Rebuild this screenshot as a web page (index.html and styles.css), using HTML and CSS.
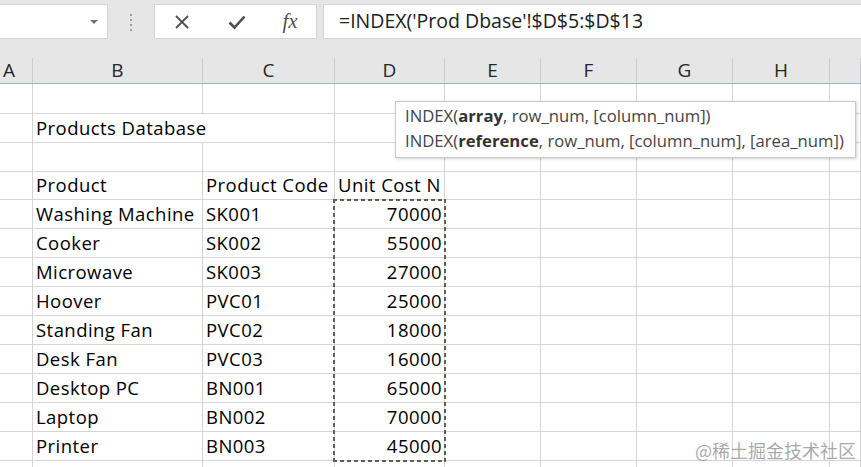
FILE: index.html
```html
<!DOCTYPE html>
<html>
<head>
<meta charset="utf-8">
<link rel="stylesheet" href="styles.css">
</head>
<body>
<div class="toolbar">
  <div class="namebox"><span class="arrow"></span></div>
  <div class="grip">
    <svg width="4" height="18" viewBox="0 0 4 18"><g fill="#9a9a9a"><rect x="1" y="1" width="2" height="2"/><rect x="1" y="6" width="2" height="2"/><rect x="1" y="11" width="2" height="2"/><rect x="1" y="16" width="2" height="2"/></g></svg>
  </div>
  <div class="fxbox">
    <span class="ico ico-x"><svg width="16" height="16" viewBox="0 0 16 16"><path d="M2 2 L14 14 M14 2 L2 14" stroke="#505050" stroke-width="1.8" fill="none"/></svg></span>
    <span class="ico ico-ok"><svg width="18" height="16" viewBox="0 0 18 16"><path d="M1.5 8.5 L6.5 13.5 L16.5 2.5" stroke="#505050" stroke-width="2.6" fill="none"/></svg></span>
    <span class="ico fx">fx</span>
  </div>
  <div class="formula">=INDEX('Prod Dbase'!$D$5:$D$13</div>
</div>

<div class="sheet">
  <div class="row hdr">
    <div class="h">A</div><div class="h">B</div><div class="h">C</div><div class="h">D</div><div class="h">E</div><div class="h">F</div><div class="h">G</div><div class="h">H</div><div class="h"></div>
  </div>
  <div class="row r30"><div class="c"></div><div class="c"></div><div class="c"></div><div class="c"></div><div class="c"></div><div class="c"></div><div class="c"></div><div class="c"></div><div class="c"></div></div>
  <div class="row"><div class="c"></div><div class="c over">Products Database</div><div class="c"></div><div class="c"></div><div class="c"></div><div class="c"></div><div class="c"></div><div class="c"></div><div class="c"></div></div>
  <div class="row"><div class="c"></div><div class="c"></div><div class="c"></div><div class="c"></div><div class="c"></div><div class="c"></div><div class="c"></div><div class="c"></div><div class="c"></div></div>
  <div class="row r28"><div class="c"></div><div class="c">Product</div><div class="c">Product Code</div><div class="c">Unit Cost N</div><div class="c"></div><div class="c"></div><div class="c"></div><div class="c"></div><div class="c"></div></div>
  <div class="row"><div class="c"></div><div class="c">Washing Machine</div><div class="c">SK001</div><div class="c num">70000</div><div class="c"></div><div class="c"></div><div class="c"></div><div class="c"></div><div class="c"></div></div>
  <div class="row"><div class="c"></div><div class="c">Cooker</div><div class="c">SK002</div><div class="c num">55000</div><div class="c"></div><div class="c"></div><div class="c"></div><div class="c"></div><div class="c"></div></div>
  <div class="row"><div class="c"></div><div class="c">Microwave</div><div class="c">SK003</div><div class="c num">27000</div><div class="c"></div><div class="c"></div><div class="c"></div><div class="c"></div><div class="c"></div></div>
  <div class="row"><div class="c"></div><div class="c">Hoover</div><div class="c">PVC01</div><div class="c num">25000</div><div class="c"></div><div class="c"></div><div class="c"></div><div class="c"></div><div class="c"></div></div>
  <div class="row"><div class="c"></div><div class="c">Standing Fan</div><div class="c">PVC02</div><div class="c num">18000</div><div class="c"></div><div class="c"></div><div class="c"></div><div class="c"></div><div class="c"></div></div>
  <div class="row"><div class="c"></div><div class="c">Desk Fan</div><div class="c">PVC03</div><div class="c num">16000</div><div class="c"></div><div class="c"></div><div class="c"></div><div class="c"></div><div class="c"></div></div>
  <div class="row"><div class="c"></div><div class="c">Desktop PC</div><div class="c">BN001</div><div class="c num">65000</div><div class="c"></div><div class="c"></div><div class="c"></div><div class="c"></div><div class="c"></div></div>
  <div class="row"><div class="c"></div><div class="c">Laptop</div><div class="c">BN002</div><div class="c num">70000</div><div class="c"></div><div class="c"></div><div class="c"></div><div class="c"></div><div class="c"></div></div>
  <div class="row"><div class="c"></div><div class="c">Printer</div><div class="c">BN003</div><div class="c num">45000</div><div class="c"></div><div class="c"></div><div class="c"></div><div class="c"></div><div class="c"></div></div>
  <div class="row"><div class="c"></div><div class="c"></div><div class="c"></div><div class="c"></div><div class="c"></div><div class="c"></div><div class="c"></div><div class="c"></div><div class="c"></div></div>
</div>

<div class="marquee"></div>

<div class="tooltip">
  <div>INDEX(<b>array</b>, row_num, [column_num])</div>
  <div>INDEX(<b>reference</b>, row_num, [column_num], [area_num])</div>
</div>

<div class="watermark">@稀土掘金技术社区</div>
</body>
</html>
```

FILE: styles.css
```css
html, body {
  margin: 0;
  padding: 0;
}
body {
  width: 861px;
  height: 467px;
  overflow: hidden;
  background: #ffffff;
  position: relative;
  font-family: "Open Sans", "Liberation Sans", sans-serif;
}

/* ---------- formula bar ---------- */
.toolbar {
  height: 52px;
  background: #e6e6e6;
  display: flex;
  align-items: flex-start;
  padding-top: 4px;
  box-sizing: border-box;
}
.namebox {
  width: 108px;
  height: 35px;
  background: #ffffff;
  border: 1px solid #d4d4d4;
  border-left: none;
  box-sizing: border-box;
  display: flex;
  justify-content: flex-end;
  align-items: center;
  padding-right: 9px;
}
.arrow {
  width: 0;
  height: 0;
  border-left: 4px solid transparent;
  border-right: 4px solid transparent;
  border-top: 4px solid #707070;
}
.grip {
  width: 46px;
  height: 35px;
  display: flex;
  align-items: center;
  justify-content: center;
}
.fxbox {
  width: 163px;
  height: 35px;
  background: #ffffff;
  border: 1px solid #d4d4d4;
  box-sizing: border-box;
  display: flex;
  align-items: center;
}
.ico {
  display: flex;
  align-items: center;
  justify-content: center;
  width: 20px;
  height: 20px;
}
.ico-x { margin-left: 17px; }
.ico-ok { margin-left: 35px; }
.fx {
  margin-left: 33px;
  font-family: "Liberation Serif", serif;
  font-style: italic;
  font-size: 21px;
  color: #505050;
}
.formula {
  flex: 1;
  margin-left: 6px;
  height: 35px;
  background: #ffffff;
  border: 1px solid #d4d4d4;
  border-right: none;
  box-sizing: border-box;
  padding-left: 15px;
  font-family: "Open Sans", "Noto Sans", sans-serif;
  font-size: 19.5px;
  line-height: 32px;
  color: #202020;
  white-space: nowrap;
}

/* ---------- sheet ---------- */
.row {
  display: grid;
  grid-template-columns: 33px 170px 132px 110px 96px 96px 96px 97px 1fr;
  height: 29px;
}
.row.r30 { height: 30px; }
.row.r28 { height: 28px; }
.row.hdr {
  height: 32px;
  background: #e6e6e6;
  border-bottom: 1px solid #9fb3c8;
  box-sizing: border-box;
}
.h {
  border-right: 1px solid #c9cdd2;
  box-sizing: border-box;
  display: flex;
  align-items: center;
  justify-content: center;
  font-size: 19px;
  color: #262626;
  margin-top: 6px;
  height: 25px;
  padding-bottom: 2px;
  line-height: 18px;
}
.h:first-child {
  justify-content: flex-start;
  padding-left: 3px;
}
.c {
  border-right: 1px solid #d4d4d4;
  border-bottom: 1px solid #d4d4d4;
  box-sizing: border-box;
  padding: 0 3px 3px 3px;
  display: flex;
  align-items: flex-end;
  font-size: 18.5px;
  letter-spacing: 0.45px;
  line-height: 22px;
  color: #000000;
  white-space: nowrap;
  overflow: hidden;
}
.c.over {
  overflow: visible;
  border-right-color: transparent;
}
.c.num {
  justify-content: flex-end;
  padding-right: 2px;
}

/* ---------- overlays ---------- */
.marquee {
  position: absolute;
  left: 333px;
  top: 199px;
  width: 113px;
  height: 263px;
  box-sizing: border-box;
  background:
    repeating-linear-gradient(90deg, #5f5f52 0 4px, transparent 4px 7px) top left / 100% 2px no-repeat,
    repeating-linear-gradient(90deg, #5f5f52 0 4px, transparent 4px 7px) bottom left / 100% 2px no-repeat,
    repeating-linear-gradient(180deg, #5f5f52 0 4px, transparent 4px 7px) top left / 2px 100% no-repeat,
    repeating-linear-gradient(180deg, #5f5f52 0 4px, transparent 4px 7px) top right / 2px 100% no-repeat;
}
.tooltip {
  position: absolute;
  left: 395px;
  top: 101px;
  width: 461px;
  height: 57px;
  box-sizing: border-box;
  background: #ffffff;
  border: 1px solid #c8c8c8;
  box-shadow: 1px 1px 3px rgba(0, 0, 0, 0.18);
  padding: 1px 0 0 9px;
  font-family: "Open Sans", "Noto Sans", sans-serif;
  font-size: 16.7px;
  line-height: 25px;
  color: #444444;
  white-space: nowrap;
}
.tooltip b {
  font-weight: 700;
  color: #333333;
}
.watermark {
  position: absolute;
  left: 695px;
  top: 437px;
  font-family: "Noto Sans CJK SC", sans-serif;
  font-size: 18px;
  line-height: 26px;
  color: rgba(140, 140, 140, 0.75);
  white-space: nowrap;
}
```
